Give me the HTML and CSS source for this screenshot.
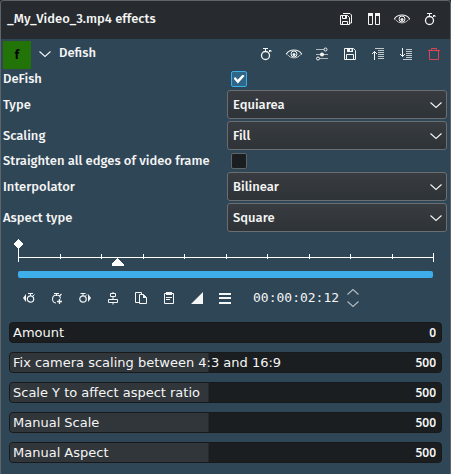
FILE: index.html
```html
<!DOCTYPE html>
<html lang="en">
<head>
<meta charset="utf-8">
<title>Effects</title>
<link rel="stylesheet" href="styles.css">
</head>
<body>
<svg class="defs" aria-hidden="true">
  <symbol id="watch" viewBox="0 0 16 16"><circle cx="7.5" cy="9.5" r="4" fill="none" stroke="currentColor" stroke-width="1.3"/><path d="M5 2.500h5M7.500 2.500v3M10.500 6.500l2-2M11 4.500h2v1.500" fill="none" stroke="currentColor"/></symbol>
  <symbol id="eye" viewBox="0 0 16 16"><path d="M0 8.500C3.500 2.500 12.500 2.500 16 8.500" fill="none" stroke="currentColor" stroke-width="1.200"/><path d="M1.500 8.500C4.500 13 11.500 13 14.500 8.500" fill="none" stroke="currentColor" stroke-width=".7"/><circle cx="8" cy="8" r="3" fill="none" stroke="currentColor"/><circle cx="8" cy="8.500" r="1.500" fill="currentColor"/></symbol>
  <symbol id="chevron" viewBox="0 0 12 8"><path d="M.5 1.500L6 6.500l5.500-5" fill="none" stroke="currentColor" stroke-width="1.100"/></symbol>
</svg>
<main class="panel">
  <header class="titlebar">
    <h1>_My_Video_3.mp4 effects</h1>
    <div class="tools">
      <button type="button" aria-label="Save stack"><svg viewBox="0 0 16 16"><path d="M2.500 4.500h7l2 2v7h-9zM4.500 4.500v3h4v-3M4.500 13.500v-3h5v3M5 2.500h7l1.500 1.500v8h-2" fill="none" stroke="currentColor"/><path d="M7 5h1.500v2H7z" fill="currentColor"/></svg></button>
      <button type="button" aria-label="Split compare"><svg viewBox="0 0 16 16"><path d="M2.500 2.500h4v11h-4zM9.500 2.500h4v11h-4z" fill="none" stroke="currentColor"/><path d="M2 2h5v3H2zM9 2h5v3H9z" fill="currentColor"/></svg></button>
      <button type="button" aria-label="Enable effects"><svg><use href="#eye"/></svg></button>
      <button type="button" aria-label="Keyframes"><svg><use href="#watch"/></svg></button>
    </div>
  </header>

  <section class="effect">
    <div class="effect-head">
      <span class="badge">f</span>
      <button type="button" class="fold" aria-label="Collapse"><svg><use href="#chevron"/></svg></button>
      <h2>Defish</h2>
      <div class="tools">
        <button type="button" aria-label="Keyframes"><svg><use href="#watch"/></svg></button>
        <button type="button" aria-label="Enable effect"><svg><use href="#eye"/></svg></button>
        <button type="button" aria-label="Presets"><svg viewBox="0 0 16 16"><path d="M2 3.500h8M2 8.500h12M6 12.500h8" fill="none" stroke="currentColor" opacity=".65"/><g fill="none" stroke="currentColor"><circle cx="11.500" cy="3.500" r="1.500"/><circle cx="4" cy="12.500" r="1.500"/></g><circle cx="8" cy="8.500" r="2" fill="currentColor"/></svg></button>
        <button type="button" aria-label="Save effect"><svg viewBox="0 0 16 16"><path d="M2.500 2.500h9l2 2v9h-11zM4.500 13.500v-5h7v5" fill="none" stroke="currentColor"/><path d="M5 2h6v4H5z" fill="currentColor"/><path class="slot" d="M8 3h1.500v2H8z"/></svg></button>
        <button type="button" aria-label="Move up"><svg viewBox="0 0 16 16"><path d="M5 2.500h9M8 4.500h6M8 6.500h6M8 8.500h6M8 10.500h6M8 12.500h6" stroke="currentColor" opacity=".75"/><path d="M4.500 14V5.500M2 8l2.500-2.500L7 8" fill="none" stroke="currentColor"/></svg></button>
        <button type="button" aria-label="Move down"><svg viewBox="0 0 16 16"><path d="M8 3.500h6M8 5.500h6M8 7.500h6M8 9.500h6M8 11.500h6M5 13.500h9" stroke="currentColor" opacity=".75"/><path d="M4.500 2v8.500M2 8l2.500 2.500L7 8" fill="none" stroke="currentColor"/></svg></button>
        <button type="button" class="danger" aria-label="Delete effect"><svg viewBox="0 0 16 16"><path d="M2 4.500h12M3.500 4.500v9h9v-9M5.500 4.500v-2h5v2" fill="none" stroke="currentColor"/></svg></button>
      </div>
    </div>

    <form class="fields">
      <label for="defish">DeFish</label>
      <input type="checkbox" id="defish" checked>
      <label for="type">Type</label>
      <div class="combo"><select id="type"><option>Equiarea</option></select><svg><use href="#chevron"/></svg></div>
      <label for="scaling">Scaling</label>
      <div class="combo"><select id="scaling"><option>Fill</option></select><svg><use href="#chevron"/></svg></div>
      <label for="edges">Straighten all edges of video frame</label>
      <input type="checkbox" id="edges">
      <label for="interp">Interpolator</label>
      <div class="combo"><select id="interp"><option>Bilinear</option></select><svg><use href="#chevron"/></svg></div>
      <label for="aspect">Aspect type</label>
      <div class="combo"><select id="aspect"><option>Square</option></select><svg><use href="#chevron"/></svg></div>
    </form>

    <div class="timeline">
      <svg class="ruler" aria-hidden="true">
        <g fill="currentColor" shape-rendering="crispEdges">
          <rect x="0" y="18" width="100%" height="1"/>
          <rect x="0" y="5" width="1" height="18"/>
          <rect x="10%" y="15" width="1" height="5"/><rect x="20%" y="15" width="1" height="5"/><rect x="30%" y="15" width="1" height="5"/><rect x="40%" y="15" width="1" height="5"/><rect x="50%" y="15" width="1" height="5"/><rect x="60%" y="15" width="1" height="5"/><rect x="70%" y="15" width="1" height="5"/><rect x="80%" y="15" width="1" height="5"/><rect x="90%" y="15" width="1" height="5"/>
          <rect x="100%" y="14" width="1" height="9"/>
          <path d="M.5 0L5 5 .5 10-4 5z"/>
          <svg x="24%" y="19" overflow="visible"><path d="M0 0l6 6v2H-6V6z"/></svg>
        </g>
      </svg>
      <div class="zoombar"></div>
    </div>

    <div class="keybar">
      <button type="button" aria-label="Previous keyframe"><svg viewBox="0 0 16 16"><path d="M5 4v8L2 8z" fill="currentColor"/><circle cx="9.500" cy="9" r="3.200" fill="none" stroke="currentColor" stroke-width="1.200"/><path d="M7 3.500h5M9.500 3.500V6M12 6l1.500-1.500" fill="none" stroke="currentColor"/></svg></button>
      <button type="button" aria-label="Add keyframe"><svg viewBox="0 0 16 16"><path d="M7 13a4 4 0 1 1 4.500-4.500M5 3.500h5M7.500 3.500V6M10.500 6l2-2" fill="none" stroke="currentColor" stroke-width="1.100"/><path d="M10.500 9v5M8 11.500h5" stroke="currentColor" stroke-width="1.300"/></svg></button>
      <button type="button" aria-label="Next keyframe"><svg viewBox="0 0 16 16"><path d="M11 4v8l3-4z" fill="currentColor"/><circle cx="6" cy="9" r="3.200" fill="none" stroke="currentColor" stroke-width="1.200"/><path d="M3.500 3.500h5M6 3.500V6M8.500 6L10 4.500" fill="none" stroke="currentColor"/></svg></button>
      <button type="button" aria-label="Center keyframe"><svg viewBox="0 0 16 16"><path d="M5.500 3.500h5v3h-5zM3.500 9.500h9v3h-9zM8 7v2M8 2v1.500M8 13v1.500" fill="none" stroke="currentColor"/></svg></button>
      <button type="button" aria-label="Copy keyframes"><svg viewBox="0 0 16 16"><path d="M6 12.500H2.500v-10h6v2M6.500 4.500h4l3 3v6h-7z" fill="none" stroke="currentColor"/><path d="M10 4l4 4h-4z" fill="currentColor"/></svg></button>
      <button type="button" aria-label="Paste keyframes"><svg viewBox="0 0 16 16"><path d="M3.500 3.500h9v10h-9zM5 7.500h6M5 9.500h4" fill="none" stroke="currentColor"/><path d="M5 2h6v3H5z" fill="currentColor"/></svg></button>
      <button type="button" aria-label="Interpolation"><svg viewBox="0 0 16 16"><path d="M14 2v12H2z" fill="currentColor"/></svg></button>
      <button type="button" aria-label="Options"><svg viewBox="0 0 16 16"><path d="M2 3h12v2H2zM2 7h12v2H2zM2 12h12v2H2z" fill="currentColor"/></svg></button>
      <input class="timecode" type="text" value="00:00:02:12" aria-label="Position">
      <div class="stepper">
        <button type="button" aria-label="Step forward"><svg class="up"><use href="#chevron"/></svg></button>
        <button type="button" aria-label="Step back"><svg><use href="#chevron"/></svg></button>
      </div>
    </div>

    <div class="sliders">
      <div class="slider"><input type="range" id="amount" min="0" max="1000" value="0"><label for="amount">Amount</label><input class="value" type="text" value="0" aria-label="Amount value"></div>
      <div class="slider"><input type="range" id="fix" min="0" max="1000" value="500" style="--fill:50%"><label for="fix">Fix camera scaling between 4:3 and 16:9</label><input class="value" type="text" value="500" aria-label="Fix camera scaling value"></div>
      <div class="slider"><input type="range" id="scaley" min="0" max="1000" value="500" style="--fill:50%"><label for="scaley">Scale Y to affect aspect ratio</label><input class="value" type="text" value="500" aria-label="Scale Y value"></div>
      <div class="slider"><input type="range" id="mscale" min="0" max="1000" value="500" style="--fill:50%"><label for="mscale">Manual Scale</label><input class="value" type="text" value="500" aria-label="Manual Scale value"></div>
      <div class="slider"><input type="range" id="maspect" min="0" max="1000" value="500" style="--fill:50%"><label for="maspect">Manual Aspect</label><input class="value" type="text" value="500" aria-label="Manual Aspect value"></div>
    </div>
  </section>
</main>
</body>
</html>
```
FILE: styles.css
```css
:root {
  --text: #f4f5f5;
  --body: #2f4656;
  --dark: #1b1e20;
  --line: #5f6467;
}
* { box-sizing: border-box; }
body {
  margin: 0;
  background: #272a2e;
  color: var(--text);
  font: 500 13px/18px "Fira Sans", "Noto Sans", sans-serif;
}
.defs { display: none; }
.panel {
  display: flex;
  flex-direction: column;
  min-height: 100vh;
  border: 1px solid var(--line);
  border-bottom: 0;
  border-radius: 4px 4px 0 0;
  background: var(--body);
  overflow: hidden;
}
h1, h2 { margin: 0; font: inherit; }
button, input, select { margin: 0; font: inherit; color: inherit; }
button {
  display: flex;
  align-items: center;
  justify-content: center;
  width: 28px;
  height: 28px;
  padding: 0;
  border: 0;
  background: none;
}
button svg { width: 16px; height: 16px; }
.tools { display: flex; margin-left: auto; }

.titlebar {
  display: flex;
  align-items: center;
  height: 38px;
  padding: 0 6px 2px;
  background: #272a2e;
}
.effect-head {
  display: flex;
  align-items: flex-start;
  height: 31px;
  padding: 1px 2px 0;
}
.effect-head h2 { line-height: 26px; }
.badge {
  width: 28px;
  height: 28px;
  margin-top: 1px;
  background: #227409;
  color: #000;
  font-size: 12px;
  font-weight: 700;
  line-height: 28px;
  text-align: center;
}
.fold svg, .combo svg { width: 12px; height: 8px; }
.slot { fill: var(--body); }
.danger { color: #da4453; }

.fields {
  display: grid;
  grid-template-columns: 1fr 1fr;
  gap: 2px 4px;
  align-items: center;
  padding: 0 3px 0 2px;
}
.fields input {
  appearance: none;
  width: 16px;
  height: 16px;
  margin: 1px 4px;
  border: 1px solid var(--line);
  border-radius: 2px;
  background: var(--dark);
}
.fields input:checked {
  display: grid;
  place-items: center;
  border-color: #3daee9;
  background: #2f6587;
}
.fields input:checked::before {
  content: "";
  width: 11px;
  height: 9px;
  background: #fff;
  clip-path: polygon(0 45%, 16% 28%, 38% 58%, 84% 0, 100% 18%, 40% 100%);
}
.combo { display: grid; align-items: center; }
.combo > * { grid-area: 1 / 1; }
.combo select {
  appearance: none;
  width: 100%;
  height: 29px;
  padding: 0 24px 0 5px;
  border: 1px solid #6a6e71;
  border-radius: 3px;
  background: linear-gradient(#383c40, #2e3337);
}
.combo svg { justify-self: end; margin-right: 5px; pointer-events: none; }

.timeline { padding: 7px 17px 0; }
.ruler { display: block; width: 100%; height: 32px; overflow: visible; color: #fff; }
.zoombar { height: 7px; border-radius: 2px; background: #3daee9; }

.keybar { display: flex; align-items: center; height: 40px; padding-left: 14px; }
.timecode {
  width: 93px;
  padding: 0;
  border: 0;
  margin-left: 14px;
  background: none;
  font: 13px/18px "DejaVu Sans Mono", monospace;
}
.stepper { display: flex; flex-direction: column; gap: 4px; color: #b3bcc2; }
.stepper button { width: 14px; height: 8px; }
.stepper svg { width: 12px; height: 8px; }
.up { transform: scaleY(-1); }

.sliders { display: grid; gap: 9px; padding: 4px 8px 10px; font: 13px/18px "DejaVu Sans", sans-serif; }
.slider {
  display: grid;
  grid-template-columns: 1fr 34px;
  align-items: center;
  height: 21px;
  border: 1px solid #17191b;
  border-radius: 4px;
  background: var(--dark);
  overflow: hidden;
}
.slider > * { grid-row: 1; }
.slider label { grid-column: 1; padding-left: 3px; white-space: nowrap; pointer-events: none; }
.slider input[type="range"] {
  appearance: none;
  grid-column: 1;
  width: 100%;
  height: 19px;
  background: linear-gradient(#31363b, #31363b) no-repeat 0 0 / var(--fill, 0%) 100%;
}
.slider input[type="range"]::-webkit-slider-thumb { appearance: none; width: 1px; height: 19px; }
.value {
  grid-column: 2;
  width: 100%;
  padding: 0 5px 0 0;
  border: 0;
  background: none;
  font: 600 12px/18px "Noto Sans", sans-serif;
  text-align: right;
}
```
